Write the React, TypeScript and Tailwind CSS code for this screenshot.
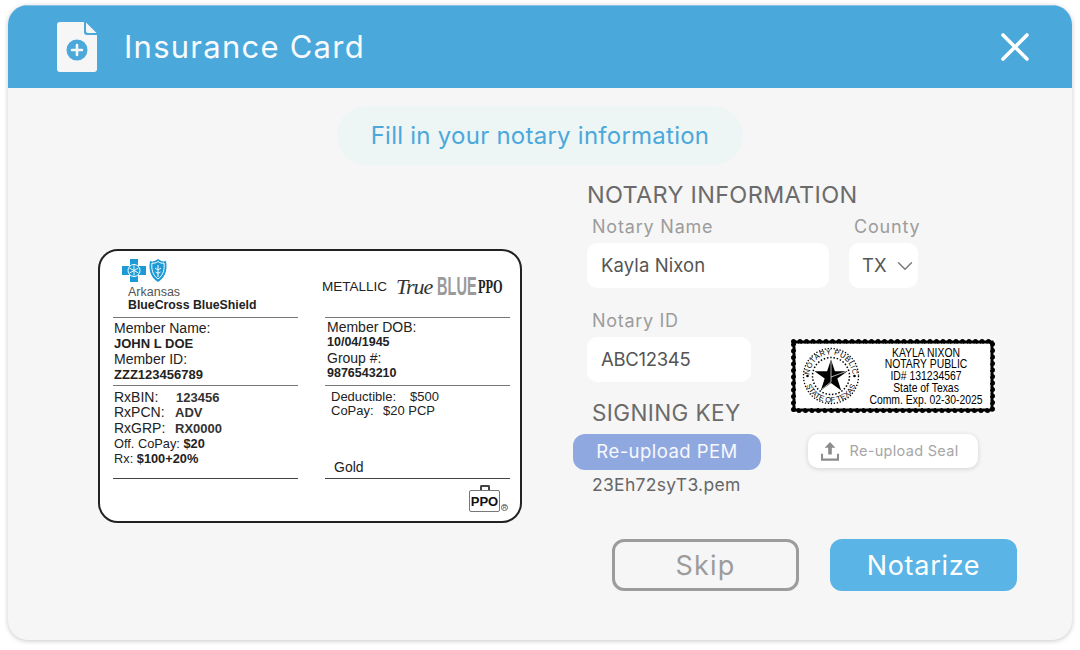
import { ChevronDown } from 'lucide-react';

const ui = "font-['Inter','Open_Sans',sans-serif]";
const cardFont = "font-['Liberation_Sans','Arial',sans-serif]";

function FileIcon() {
  return (
    <svg width="40" height="50" viewBox="0 0 40 50">
      <path d="M3 0H27V10a3 3 0 0 0 3 3H40V47a3 3 0 0 1-3 3H3a3 3 0 0 1-3-3V3a3 3 0 0 1 3-3Z" fill="#f6f6f6" />
      <path d="M29 0.5L39.5 11H31a2 2 0 0 1-2-2Z" fill="#f6f6f6" />
      <circle cx="20" cy="28" r="10.5" fill="#4aa8db" />
      <path d="M20 23v10M15 28h10" stroke="#f6f6f6" strokeWidth="2.6" strokeLinecap="round" />
    </svg>
  );
}

function BcbsLogo() {
  return (
    <div className="flex items-start gap-[3px] ml-[9px]">
      <svg width="24" height="23" viewBox="0 0 24 23">
        <path d="M8 0h8v7h8v9h-8v7H8v-7H0V7h8Z" fill="#1b9ad6" />
        <circle cx="12" cy="11.5" r="6" fill="none" stroke="#fff" strokeWidth="1" />
        <path d="M12 6.5v10M7.5 9l9 5M16.5 9l-9 5" stroke="#fff" strokeWidth="0.9" />
      </svg>
      <svg width="18" height="23" viewBox="0 0 18 23">
        <path d="M1 2c3 1 5 0 8-2 3 2 5 3 8 2 1.500 8 0 16-8 21C1 18-.5 10 1 2Z" fill="#1b9ad6" />
        <path d="M3 4c2 .5 4 0 6-1.500 2 1.500 4 2 6 1.500 .8 6-.5 12-6 16C3.500 16 2.200 10 3 4Z" fill="none" stroke="#fff" strokeWidth="1" />
        <path d="M9 6v12M6 9c2 2 4 2 6 0M6.500 13c2 1.500 3 1.500 5 0" stroke="#fff" strokeWidth="1" fill="none" />
      </svg>
    </div>
  );
}

function PpoBadge() {
  return (
    <div className="flex items-end gap-[1px] mt-[6px] mr-[2px]">
      <div className="flex flex-col items-center">
        <div className="w-[10px] h-[5px] border-2 border-b-0 border-[#444] rounded-t-[2px]" />
        <div className="w-[31px] h-[22px] border border-[#777] rounded-[2px] bg-white flex items-center justify-center text-[13px] font-bold text-[#111] leading-none">
          PPO
        </div>
      </div>
      <span className="w-[7px] h-[7px] mb-[1px] rounded-full border border-[#666] text-[5px] leading-[5px] text-center text-[#444]">R</span>
    </div>
  );
}

function InsuranceCard() {
  return (
    <div className={`${cardFont} w-[424px] h-[274px] bg-white border-2 border-[#222] rounded-[20px] px-[13px] text-[14px] leading-[15.3px] text-[#222] grid grid-cols-[185px_185px] gap-x-[27px] grid-rows-[67px_68px_93px_1fr]`}>
      <div className="border-b border-[#777] pt-[8px]">
        <BcbsLogo />
        <div className="ml-[15px] mt-[4px] text-[12.5px] leading-[13px] text-[#555]">Arkansas</div>
        <div className="ml-[15px] text-[12.3px] leading-[13px] font-bold text-[#222]">BlueCross BlueShield</div>
      </div>
      <div className="border-b border-[#777] flex items-center -mt-[1px] pt-[7px]">
        <span className="-ml-[3px] text-[13.5px] text-[#222]">METALLIC</span>
        <span className="ml-[9px] font-['Liberation_Serif',serif] italic text-[22px] text-[#333] tracking-[-1px]">True</span>
        <span className="ml-[5px] w-[38px] inline-block origin-left scale-x-[0.56] text-[26px] font-bold text-[#9a9a9a]">BLUE</span>
        <span className="ml-[3px] w-[26px] inline-block origin-left scale-x-[0.65] font-['Liberation_Serif',serif] font-bold text-[19px] text-[#222]">PPO</span>
      </div>

      <div className="border-b border-[#777] pt-[3px]">
        <div className="ml-[1px]">Member Name:</div>
        <div className="ml-[1px] font-bold text-[13px]">JOHN L DOE</div>
        <div className="ml-[1px]">Member ID:</div>
        <div className="ml-[1px] font-bold text-[13px]">ZZZ123456789</div>
      </div>
      <div className="border-b border-[#777] pt-[2px]">
        <div className="ml-[2px]">Member DOB:</div>
        <div className="ml-[2px] font-bold text-[12.5px]">10/04/1945</div>
        <div className="ml-[2px]">Group #:</div>
        <div className="ml-[2px] font-bold text-[12.5px]">9876543210</div>
      </div>

      <div className="border-b border-[#444] pt-[4px] ml-0">
        <div className="ml-[1px] flex"><span className="w-[62px]">RxBIN:</span><b className="text-[13px] text-[#333]">123456</b></div>
        <div className="ml-[1px] flex"><span className="w-[61px]">RxPCN:</span><b className="text-[13px] text-[#333]">ADV</b></div>
        <div className="ml-[1px] flex"><span className="w-[61px]">RxGRP:</span><b className="text-[13px] text-[#333]">RX0000</b></div>
        <div className="ml-[1px] text-[12.8px]">Off. CoPay: <b>$20</b></div>
        <div className="ml-[1px] text-[12.8px]">Rx: <b>$100+20%</b></div>
      </div>
      <div className="border-b border-[#444] pt-[4px] flex flex-col text-[13px] leading-[14px]">
        <div className="ml-[6px] flex"><span className="w-[79px]">Deductible:</span><span>$500</span></div>
        <div className="ml-[6px] flex"><span className="w-[52px]">CoPay:</span><span>$20 PCP</span></div>
        <div className="ml-[9px] mt-auto mb-[4px] text-[14px]">Gold</div>
      </div>

      <div />
      <div className="flex justify-end items-start">
        <PpoBadge />
      </div>
    </div>
  );
}

function NotarySeal() {
  return (
    <div className={`${cardFont} relative w-[204px] h-[74px] bg-white flex items-center pl-[11px] text-black overflow-hidden`}>
      <svg className="absolute inset-0" width="204" height="74" viewBox="0 0 204 74">
        <rect x="3" y="3" width="198" height="68" fill="none" stroke="#000" strokeWidth="3" />
        <rect x="2.500" y="2.500" width="199" height="69" fill="none" stroke="#000" strokeWidth="5" strokeLinecap="round" strokeDasharray="0 6.500" />
        <rect x="5.500" y="5.500" width="193" height="63" fill="none" stroke="#fff" strokeWidth="2.200" strokeLinecap="round" strokeDasharray="0 6.500" strokeDashoffset="3.200" />
      </svg>
      <svg width="58" height="58" viewBox="0 0 58 58" className="shrink-0">
        <defs>
          <path id="sealTop" d="M7.500 29a21.500 21.500 0 0 1 43 0" />
          <path id="sealBottom" d="M2.500 29a26.500 26.500 0 0 0 53 0" />
        </defs>
        <circle cx="29" cy="29" r="27.500" fill="none" stroke="#000" strokeWidth="1.300" strokeDasharray="1.300 1.700" />
        <circle cx="29" cy="29" r="18.500" fill="none" stroke="#000" strokeWidth="1.500" strokeDasharray="1.500 1.800" />
        <text fontSize="7.500" fill="#000" letterSpacing="0.4">
          <textPath href="#sealTop" startOffset="50%" textAnchor="middle">NOTARY PUBLIC</textPath>
        </text>
        <text fontSize="7.500" fill="#000" letterSpacing="0.1">
          <textPath href="#sealBottom" startOffset="50%" textAnchor="middle">STATE OF TEXAS</textPath>
        </text>
        <circle cx="5.500" cy="29" r="1.300" fill="#000" />
        <circle cx="52.500" cy="29" r="1.300" fill="#000" />
        <path d="M29 12.500l3.900 11.700H45.500L35.300 31.500l3.900 12L29 36l-10.200 7.500 3.900-12L12.500 24.200H25.100Z" fill="#000" />
        <path d="M29 14.500V35M29 35l-9 7M29 30l15-5.500" stroke="#fff" strokeWidth="0.700" />
      </svg>
      <div className="w-[116px] ml-[8px] flex flex-col items-center text-[13.5px] leading-[11.700px] scale-x-[0.77] whitespace-nowrap">
        <span>KAYLA NIXON</span>
        <span>NOTARY PUBLIC</span>
        <span>ID# 131234567</span>
        <span>State of Texas</span>
        <span>Comm. Exp. 02-30-2025</span>
      </div>
    </div>
  );
}

export default function App() {
  return (
    <div className={`${ui} w-[1080px] h-[650px] bg-white pt-[5px] pl-[8px]`}>
      <div className="w-[1064px] h-[635px] rounded-[20px] overflow-hidden bg-[#f6f6f6] shadow-[0_1px_5px_rgba(0,0,0,0.22)] flex flex-col">
        <header className="h-[83px] shrink-0 bg-[#4aa8db] flex items-center pl-[49px] pr-[42px] border-t border-[#86c5e8]">
          <FileIcon />
          <h1 className="ml-[27px] text-[31px] font-normal text-[#f8fbfd] tracking-[1.250px]">Insurance Card</h1>
          <svg className="ml-auto" width="30" height="30" viewBox="0 0 30 30">
            <path d="M3 3L27 27M27 3L3 27" stroke="#fff" strokeWidth="3.600" strokeLinecap="round" />
          </svg>
        </header>

        <div className="flex-1 flex flex-col pt-[18px]">
          <div className="self-center w-[406px] h-[59px] rounded-full bg-[#eef5f5] flex items-center justify-center text-[24px] text-[#4aa8db] tracking-[0.25px]">
            Fill in your notary information
          </div>

          <div className="flex">
            <div className="ml-[90px] mt-[84px]">
              <InsuranceCard />
            </div>

            <div className="ml-[51px] mt-[16px] w-[480px]">
              <h2 className="pl-[14px] h-[28px] leading-[28px] text-[23.5px] font-normal text-[#6b6b6b] tracking-[0.3px] whitespace-nowrap">NOTARY INFORMATION</h2>

              <div className="flex pl-[14px] mt-[7px] gap-[20px]">
                <div className="w-[242px]">
                  <div className="pl-[5px] h-[22px] leading-[22px] text-[18px] text-[#9c9c9c] tracking-[0.8px]">Notary Name</div>
                  <div className="mt-[5px] h-[45px] rounded-[10px] bg-white flex items-center pl-[14px] text-[18.500px] text-[#555] tracking-[0.1px]">Kayla Nixon</div>
                </div>
                <div className="w-[69px]">
                  <div className="pl-[5px] h-[22px] leading-[22px] text-[18px] text-[#9c9c9c] tracking-[0.8px]">County</div>
                  <div className="mt-[5px] h-[45px] rounded-[10px] bg-white flex items-center pl-[13px] text-[18.500px] text-[#555]">
                    TX
                    <ChevronDown className="ml-[5px] text-[#777]" size={26} strokeWidth={1.3} />
                  </div>
                </div>
              </div>

              <div className="flex mt-[22px]">
                <div className="w-[204px]">
                  <div className="ml-[19px] h-[22px] leading-[22px] text-[18px] text-[#9c9c9c] tracking-[0.7px]">Notary ID</div>
                  <div className="ml-[14px] mt-[5px] w-[164px] h-[45px] rounded-[10px] bg-white flex items-center pl-[14px] text-[18.500px] text-[#555] tracking-[-0.3px]">ABC12345</div>
                  <div className="ml-[19px] mt-[18px] h-[26px] leading-[26px] text-[22.5px] text-[#6b6b6b] tracking-[0.4px]">SIGNING KEY</div>
                  <div className="mt-[8px] w-[188px] h-[36px] rounded-[12px] bg-[#8fa8e0] flex items-center justify-center text-[18.500px] text-[#f8f8fc] tracking-[0.45px]">Re-upload PEM</div>
                  <div className="ml-[19px] mt-[4px] h-[22px] leading-[22px] text-[17.500px] text-[#666] tracking-[0.3px]">23Eh72syT3.pem</div>
                </div>
                <div className="ml-[14px] w-[204px] flex flex-col items-center">
                  <div className="mt-[29px]">
                    <NotarySeal />
                  </div>
                  <div className="mt-[21px] w-[170px] h-[34px] rounded-[10px] bg-white shadow-[0_1px_5px_rgba(0,0,0,0.15)] flex items-center justify-center pr-[7px] text-[14.500px] text-[#a6a6a6] tracking-[0.3px]">
                    <svg width="18" height="22" viewBox="0 0 20 22" className="mr-[11px]">
                      <path d="M10 1L4 7.500h4V15h4V7.500h4Z" fill="#8c8c8c" />
                      <path d="M1 14v6.500h18V14" fill="none" stroke="#8c8c8c" strokeWidth="2.500" />
                    </svg>
                    Re-upload Seal
                  </div>
                </div>
              </div>

              <div className="flex ml-[39px] mt-[43px] gap-[31px]">
                <div className="w-[187px] h-[52px] rounded-[12px] border-[3px] border-[#9c9c9c] flex items-center justify-center pt-[3px] text-[27px] text-[#9c9c9c] tracking-[1.2px]">Skip</div>
                <div className="w-[187px] h-[52px] rounded-[12px] bg-[#5ab4e6] flex items-center justify-center pt-[3px] text-[27px] text-white tracking-[0.7px]">Notarize</div>
              </div>
            </div>
          </div>
        </div>
      </div>
    </div>
  );
}
